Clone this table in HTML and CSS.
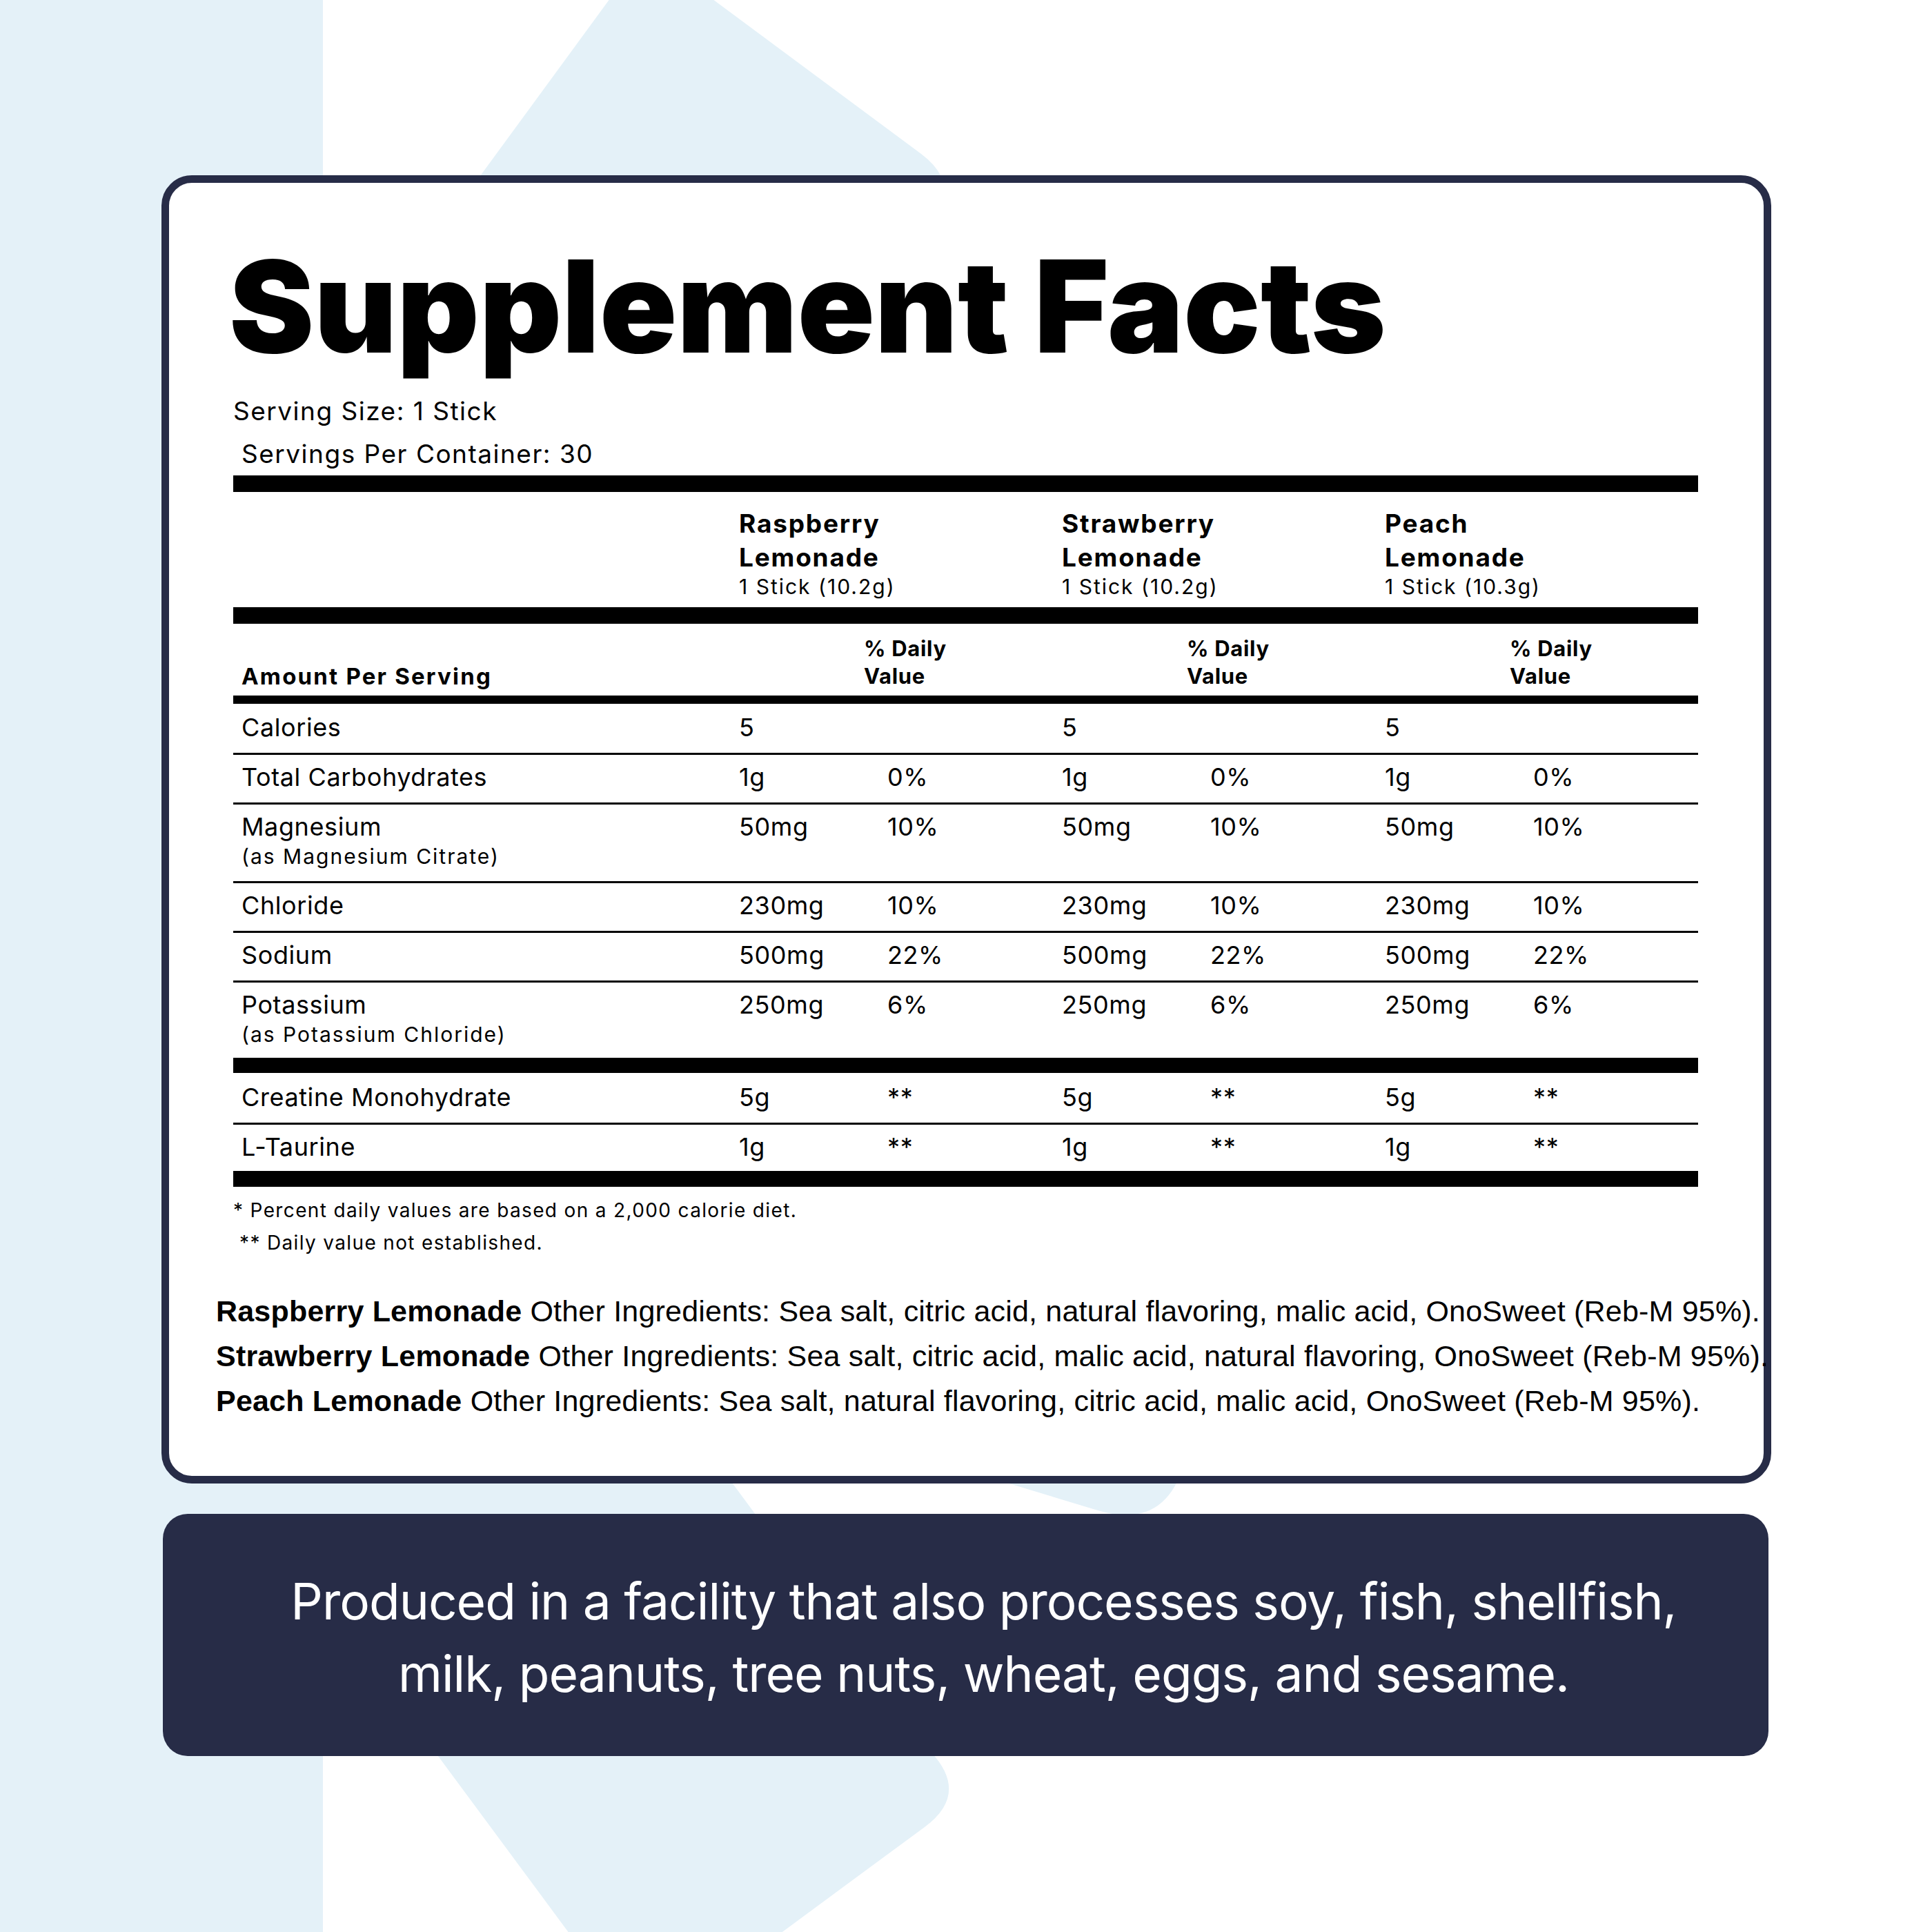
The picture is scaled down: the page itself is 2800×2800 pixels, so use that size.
FILE: index.html
```html
<!DOCTYPE html>
<html lang="en">
<head>
<meta charset="utf-8">
<title>Supplement Facts</title>
<link rel="stylesheet" href="styles.css">
</head>
<body>
<svg class="bg" width="2800" height="2800" viewBox="0 0 2800 2800" aria-hidden="true">
  <path class="shape" d="M936,-73 L1335,223 Q1395,268 1351,328 L800,1071 L346,733 Z"/>
  <path class="shape" d="M503,1394 L1350,2540 Q1405,2600 1340,2648 L933,2948 L38,1738 Z"/>
  <path class="shape" d="M1000,2010 L1591,2189 Q1687,2218 1716,2122 L1800,1850 Z"/>
</svg>
<main class="page">
  <section class="card">
    <h1 class="title">Supplement Facts</h1>
    <p class="serving">Serving Size: 1 Stick</p>
    <p class="serving indent">Servings Per Container: 30</p>

    <div class="facts">
      <div class="rule thick"></div>
      <div class="flavors">
        <div></div>
        <div class="flavor">Raspberry<br>Lemonade<span class="stick">1 Stick (10.2g)</span></div>
        <div class="flavor">Strawberry<br>Lemonade<span class="stick">1 Stick (10.2g)</span></div>
        <div class="flavor">Peach<br>Lemonade<span class="stick">1 Stick (10.3g)</span></div>
      </div>
      <div class="rule thick"></div>
      <div class="row head">
        <div class="aps">Amount Per Serving</div>
        <div></div><div class="dvh">% Daily<br>Value</div>
        <div></div><div class="dvh">% Daily<br>Value</div>
        <div></div><div class="dvh">% Daily<br>Value</div>
      </div>
      <div class="rule medium"></div>

      <div class="row item first">
        <div class="name">Calories</div>
        <div>5</div><div></div><div>5</div><div></div><div>5</div><div></div>
      </div>
      <div class="row item">
        <div class="name">Total Carbohydrates</div>
        <div>1g</div><div>0%</div><div>1g</div><div>0%</div><div>1g</div><div>0%</div>
      </div>
      <div class="row item">
        <div class="name">Magnesium<span class="sub">(as Magnesium Citrate)</span></div>
        <div>50mg</div><div>10%</div><div>50mg</div><div>10%</div><div>50mg</div><div>10%</div>
      </div>
      <div class="row item">
        <div class="name">Chloride</div>
        <div>230mg</div><div>10%</div><div>230mg</div><div>10%</div><div>230mg</div><div>10%</div>
      </div>
      <div class="row item">
        <div class="name">Sodium</div>
        <div>500mg</div><div>22%</div><div>500mg</div><div>22%</div><div>500mg</div><div>22%</div>
      </div>
      <div class="row item last">
        <div class="name">Potassium<span class="sub">(as Potassium Chloride)</span></div>
        <div>250mg</div><div>6%</div><div>250mg</div><div>6%</div><div>250mg</div><div>6%</div>
      </div>
      <div class="rule thick2"></div>
      <div class="row item after-thick">
        <div class="name">Creatine Monohydrate</div>
        <div>5g</div><div>**</div><div>5g</div><div>**</div><div>5g</div><div>**</div>
      </div>
      <div class="row item last">
        <div class="name">L-Taurine</div>
        <div>1g</div><div>**</div><div>1g</div><div>**</div><div>1g</div><div>**</div>
      </div>
      <div class="rule thick3"></div>
    </div>

    <div class="notes">
      <p>* Percent daily values are based on a 2,000 calorie diet.</p>
      <p class="n2">** Daily value not established.</p>
    </div>

    <div class="ingredients">
      <p><b>Raspberry Lemonade</b> Other Ingredients: Sea salt, citric acid, natural flavoring, malic acid, OnoSweet (Reb-M 95%).</p>
      <p><b>Strawberry Lemonade</b> Other Ingredients: Sea salt, citric acid, malic acid, natural flavoring, OnoSweet (Reb-M 95%).</p>
      <p><b>Peach Lemonade</b> Other Ingredients: Sea salt, natural flavoring, citric acid, malic acid, OnoSweet (Reb-M 95%).</p>
    </div>
  </section>

  <section class="banner">
    <p>Produced in a facility that also processes soy, fish, shellfish,<br>milk, peanuts, tree nuts, wheat, eggs, and sesame.</p>
  </section>
</main>
</body>
</html>
```

FILE: styles.css
```css
html, body {
  margin: 0;
  padding: 0;
}

body {
  width: 2800px;
  height: 2800px;
  position: relative;
  overflow: hidden;
  background: linear-gradient(90deg, #e4f1f8 0, #e4f1f8 468px, #ffffff 468px);
  font-family: Inter, "Noto Sans", sans-serif;
  color: #000;
}

.bg {
  position: absolute;
  left: 0;
  top: 0;
  width: 2800px;
  height: 2800px;
}

.shape {
  fill: #e4f1f8;
}

.page {
  position: relative;
  padding: 254px 0 0 234px;
}

/* ---------- card ---------- */
.card {
  width: 2333px;
  box-sizing: border-box;
  border: 11px solid #272c47;
  border-radius: 44px;
  background: #fff;
  padding: 87px 95px 76px 93px;
}

.title {
  margin: 0 0 28px -6px;
  font-family: Inter, sans-serif;
  font-weight: 900;
  font-size: 185px;
  line-height: 185px;
  letter-spacing: 0;
  white-space: nowrap;
}

.serving {
  margin: 0;
  font-size: 37px;
  line-height: 62px;
  letter-spacing: 1.5px;
}

.serving.indent {
  padding-left: 12px;
}

/* ---------- facts table ---------- */
.rule {
  background: #000;
}

.rule.thick {
  height: 24px;
}

.rule.medium {
  height: 12px;
}

.rule.thick2 {
  height: 22px;
}

.rule.thick3 {
  height: 23px;
}

.flavors {
  display: grid;
  grid-template-columns: 733px 468px 468px 1fr;
  padding: 21px 0 12px;
}

.flavor {
  font-weight: 700;
  font-size: 37px;
  line-height: 49px;
  letter-spacing: 1.8px;
}

.stick {
  display: block;
  font-weight: 400;
  font-size: 30px;
  line-height: 36px;
  letter-spacing: 2px;
}

.row {
  display: grid;
  grid-template-columns: 733px 215px 253px 215px 253px 215px 1fr;
}

.head {
  padding: 16px 0 8px;
  align-items: end;
}

.aps {
  padding-left: 12px;
  font-weight: 700;
  font-size: 33px;
  line-height: 40px;
  letter-spacing: 2.2px;
}

.dvh {
  margin-left: -34px;
  font-weight: 700;
  font-size: 31px;
  line-height: 40px;
  letter-spacing: 0.7px;
}

.item {
  font-size: 36px;
  line-height: 43px;
  letter-spacing: 0.6px;
  padding: 11px 0 15px;
  border-bottom: 3px solid #000;
}

.item.first {
  padding-top: 13px;
}

.item.after-thick {
  padding-top: 14px;
}

.item.last {
  border-bottom: none;
  padding-bottom: 13px;
}

.name {
  padding-left: 12px;
}

.sub {
  display: block;
  font-size: 30px;
  line-height: 42px;
  letter-spacing: 2px;
}

/* ---------- notes ---------- */
.notes {
  margin-top: 11px;
  font-size: 28px;
  line-height: 47px;
  letter-spacing: 1.35px;
}

.notes p {
  margin: 0;
}

.notes .n2 {
  padding-left: 9px;
}

.ingredients {
  margin: 43px -95px 0 -25px;
  font-family: "Liberation Sans", Arial, sans-serif;
  font-size: 43px;
  line-height: 65px;
  letter-spacing: 0.2px;
  white-space: nowrap;
}

.ingredients p {
  margin: 0;
}

/* ---------- banner ---------- */
.banner {
  margin: 44px 0 0 2px;
  width: 2327px;
  height: 351px;
  box-sizing: border-box;
  background: #272c47;
  border-radius: 36px;
  padding: 74px 0 0 52px;
  color: #fff;
  text-align: center;
  font-size: 73px;
  line-height: 105px;
  letter-spacing: -1px;
}

.banner p {
  margin: 0;
}
```
